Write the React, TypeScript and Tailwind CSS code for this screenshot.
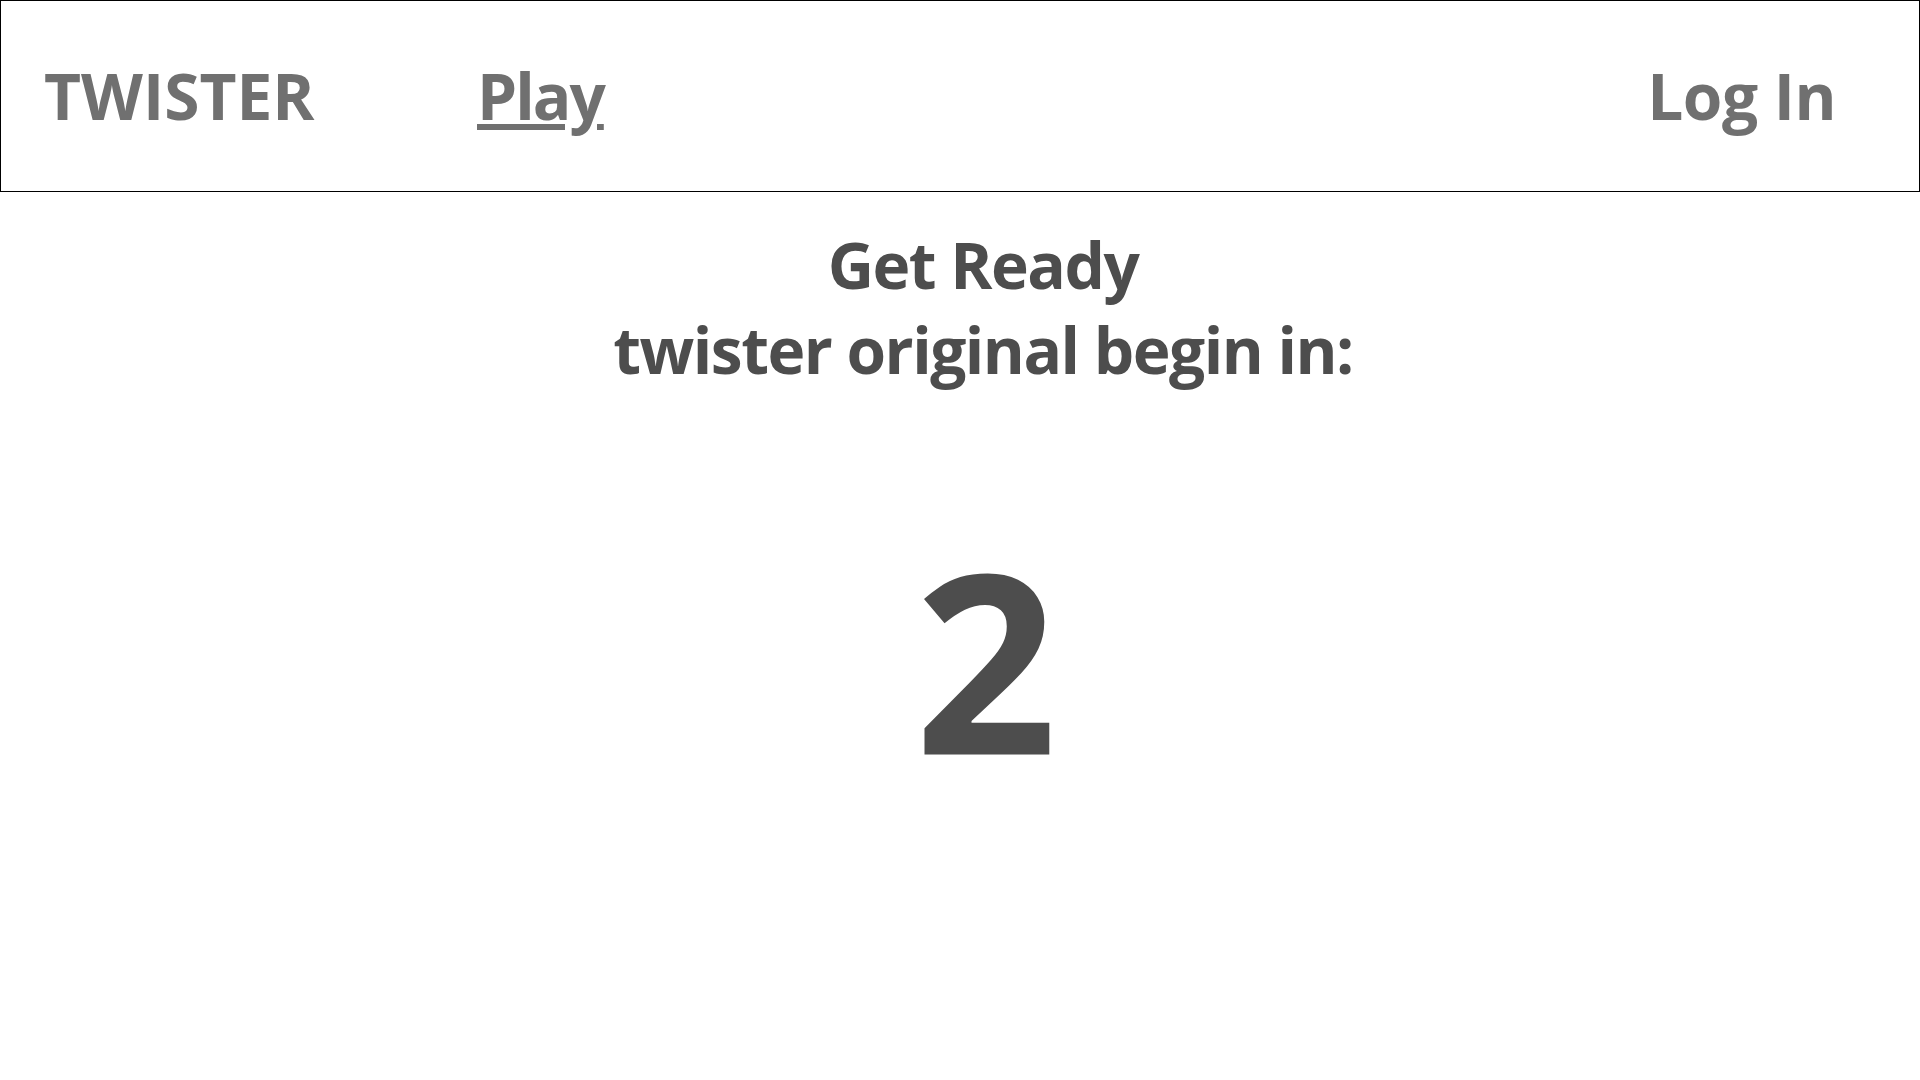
import React from "react";

export default function App() {
  return (
    <div className="min-h-screen bg-white" style={{ fontFamily: '"Open Sans", "Noto Sans", sans-serif' }}>
      <header className="h-[192px] border border-black flex items-center pl-[43px] pr-[83px]">
        <div className="text-[64px] font-bold text-[#707070] leading-none w-[433px]">TWISTER</div>
        <a className="text-[64px] font-bold text-[#707070] leading-none underline tracking-[-2px]">Play</a>
        <div className="flex-1" />
        <div className="text-[64px] font-bold text-[#707070] leading-none tracking-[-0.5px]">Log In</div>
      </header>
      <main className="flex flex-col items-center text-[#4d4d4d] font-bold pl-[46px]">
        <div className="mt-[30px] text-[64px] leading-[85px] text-center tracking-[-1.5px]">
          <div>Get Ready</div>
          <div>twister original begin in:</div>
        </div>
        <div className="mt-[141px] text-[250px] leading-none tracking-[-6px]">2</div>
      </main>
    </div>
  );
}
